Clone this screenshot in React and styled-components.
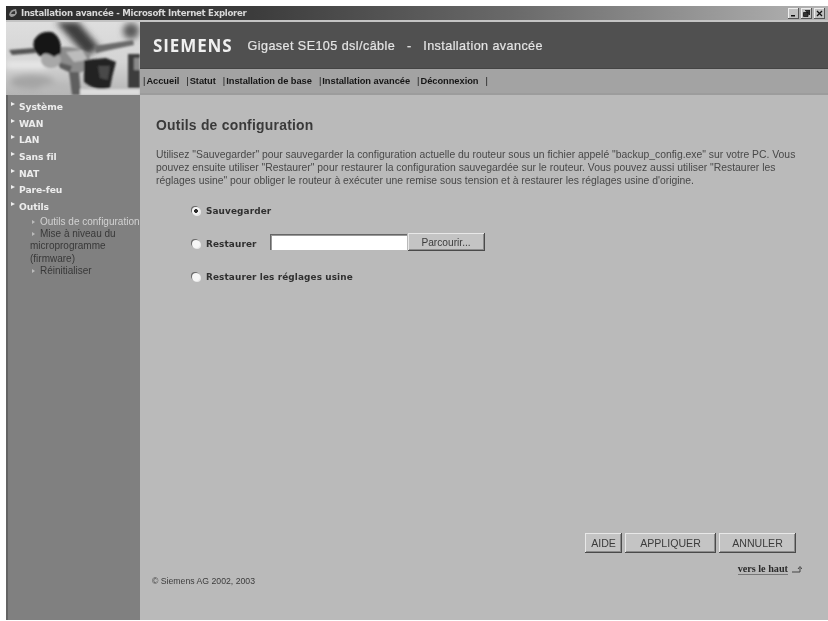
import React from 'react';
import styled, { createGlobalStyle } from 'styled-components';

const GlobalStyle = createGlobalStyle`
  html, body {
    margin: 0;
    padding: 0;
    background: #fff;
    overflow: hidden;
  }
`;

const Page = styled.div`
  width: 828px;
  height: 621px;
  padding: 6px 0 1px 6px;
  box-sizing: border-box;
  background: #fff;
  font-family: "Liberation Sans", Arial, sans-serif;
  filter: blur(0.5px);
`;

const Window = styled.div`
  height: 100%;
  display: flex;
  flex-direction: column;
  background: #bababa;
`;

const TitleBar = styled.div`
  height: 14px;
  flex: none;
  display: flex;
  align-items: center;
  padding: 0 3px 0 2px;
  gap: 3px;
  background: linear-gradient(90deg, #2c2c2c 0%, #3c3c3c 30%, #6a6a6a 62%, #b4b4b4 100%);
  border-bottom: 2px solid #c4c4c4;
  color: #d8d8d8;
  font-family: "DejaVu Sans", sans-serif;
  font-size: 8.6px;
  font-weight: 700;
  letter-spacing: -0.28px;
`;

const TitleText = styled.span`
  flex: 1;
  white-space: nowrap;
`;

const WinButtons = styled.div`
  display: flex;
  gap: 2px;
`;

const WinButton = styled.div`
  width: 11px;
  height: 11px;
  background: #c0c0c0;
  box-shadow: inset -1px -1px 0 #555, inset 1px 1px 0 #eee;
  display: flex;
  align-items: center;
  justify-content: center;
`;

const Top = styled.div`
  display: flex;
  flex: none;
  height: 73px;
`;

const Photo = styled.svg`
  width: 134px;
  height: 73px;
  flex: none;
  display: block;
`;

const TopRight = styled.div`
  flex: 1;
  display: flex;
  flex-direction: column;
`;

const Banner = styled.div`
  height: 47px;
  box-sizing: border-box;
  padding: 1px 0 0 13px;
  display: flex;
  align-items: center;
  background: #505050;
  border-bottom: 1px solid #444;
  color: #e4e4e4;
  white-space: nowrap;
`;

const Brand = styled.span`
  font-family: "Open Sans", sans-serif;
  font-weight: 700;
  font-size: 17px;
  letter-spacing: 0.9px;
  color: #f0f0f0;
  margin-right: 15px;
`;

const BannerText = styled.span`
  font-size: 12.6px;
  font-weight: 400;
  letter-spacing: 0.42px;
  white-space: pre;
  -webkit-text-stroke: 0.2px #e4e4e4;
`;

const Nav = styled.nav`
  flex: 1;
  display: flex;
  align-items: center;
  background: #a3a3a3;
  border-bottom: 2px solid #9c9c9c;
  font-size: 9.3px;
  font-weight: 700;
  letter-spacing: -0.03px;
  color: #161616;
  padding-left: 3px;
  white-space: pre;
`;

const NavItem = styled.span`
  margin-right: 7px;
  &::before {
    content: '|';
    font-weight: 400;
    margin-right: 1px;
  }
`;

const Body = styled.div`
  flex: 1;
  display: flex;
  min-height: 0;
`;

const Sidebar = styled.aside`
  width: 134px;
  flex: none;
  box-sizing: border-box;
  padding-top: 4px;
  background: #808080;
  border-left: 2px solid #646464;
`;

const MenuItem = styled.div`
  position: relative;
  height: 16.7px;
  line-height: 16px;
  padding-left: 11px;
  font-family: "DejaVu Sans", sans-serif;
  font-size: 9.2px;
  font-weight: 700;
  letter-spacing: -0.1px;
  color: #ececec;
  &::before {
    content: '';
    position: absolute;
    left: 3px;
    top: 3px;
    border-left: 4px solid #eee;
    border-top: 2.5px solid transparent;
    border-bottom: 2.5px solid transparent;
  }
`;

const SubMenu = styled.div`
  font-size: 10px;
  line-height: 12.3px;
  margin-right: -2px;
  white-space: nowrap;
`;

const SubItem = styled.div`
  color: ${props => (props.$active ? '#d2d2d2' : '#383838')};
  padding-left: 22px;
`;

const SubFirst = styled.span`
  display: inline-block;
  margin-left: 2px;
  &::before {
    content: '';
    display: inline-block;
    vertical-align: 1px;
    margin-right: 5px;
    border-left: 3px solid #bbb;
    border-top: 2px solid transparent;
    border-bottom: 2px solid transparent;
  }
`;

const Main = styled.main`
  flex: 1;
  min-width: 0;
  display: flex;
  flex-direction: column;
  padding: 22px 0 0 16px;
`;

const Heading = styled.h1`
  margin: 0 0 15px;
  font-size: 13.9px;
  line-height: 16px;
  font-weight: 700;
  color: #3a3a3a;
  letter-spacing: 0.24px;
`;

const Intro = styled.p`
  margin: 0 0 13px;
  width: 672px;
  font-size: 10.38px;
  line-height: 13px;
  color: #484848;
  white-space: pre;
`;

const Options = styled.form`
  display: flex;
  flex-direction: column;
  gap: 11.5px;
  padding-left: 37px;
`;

const Row = styled.div`
  height: 21.5px;
  display: flex;
  align-items: center;
`;

const Radio = styled.span`
  width: 8px;
  height: 8px;
  flex: none;
  margin: 0 6px 0 -1px;
  border-radius: 50%;
  background: ${props => (props.$checked ? 'radial-gradient(circle, #2c2c2c 0 1.6px, #f4f4f4 2.2px)' : '#f6f6f6')};
  box-shadow: -1px -1px 0 #6a6a6a, 1px 1px 0 #e8e8e8;
`;

const OptionLabel = styled.label`
  font-family: "DejaVu Sans", sans-serif;
  font-size: 8.9px;
  font-weight: 700;
  color: #303030;
  letter-spacing: 0.12px;
`;

const FileGroup = styled.div`
  display: flex;
  align-items: center;
  gap: 1px;
  margin: 0 0 3px 13px;
`;

const FileInput = styled.div`
  width: 137px;
  height: 16px;
  background: #fff;
  box-shadow: inset 1px 1px 0 #666, inset 2px 2px 0 #999;
`;

const GrayButton = styled.button`
  width: ${props => props.$w}px;
  height: ${props => props.$h}px;
  padding: 0;
  border: 0;
  background: #c4c4c4;
  box-shadow: inset -1px -1px 0 #4a4a4a, inset 1px 1px 0 #e8e8e8, inset -2px -2px 0 #8c8c8c;
  font-family: "Liberation Sans", Arial, sans-serif;
  font-size: ${props => props.$size}px;
  color: #3c3c3c;
`;

const Actions = styled.div`
  margin-top: auto;
  display: flex;
  justify-content: flex-end;
  gap: 3px;
  padding-right: 32px;
`;

const TopLink = styled.div`
  margin-top: 10px;
  padding-right: 26px;
  display: flex;
  justify-content: flex-end;
  align-items: center;
  gap: 4px;
  font-family: "Liberation Serif", serif;
  font-size: 10.2px;
  font-weight: 700;
  color: #2a2a2a;
  line-height: 11px;
`;

const Underlined = styled.span`
  border-bottom: 1px solid #777;
`;

const Copyright = styled.div`
  margin: 1px 0 34px -4px;
  font-size: 8.7px;
  line-height: 10px;
  color: #3c3c3c;
`;

function KidPhoto() {
  return (
    <Photo viewBox="0 0 134 73">
      <defs>
        <linearGradient id="sky" x1="0" y1="0" x2="0" y2="1">
          <stop offset="0" stopColor="#dedede" />
          <stop offset="0.55" stopColor="#d4d4d4" />
          <stop offset="1" stopColor="#b4b4b4" />
        </linearGradient>
        <filter id="soft"><feGaussianBlur stdDeviation="1.3" /></filter>
        <filter id="softer"><feGaussianBlur stdDeviation="3" /></filter>
      </defs>
      <rect width="134" height="73" fill="url(#sky)" />
      <g filter="url(#softer)">
        <path d="M50 0 L72 0 L94 26 L80 34 Z" fill="#3c3c3c" />
        <ellipse cx="125" cy="9" rx="8" ry="8" fill="#5a5a5a" />
        <ellipse cx="26" cy="60" rx="22" ry="7" fill="#a4a4a4" />
        <ellipse cx="50" cy="66" rx="16" ry="5" fill="#b8b8b8" />
        <rect x="0" y="40" width="40" height="6" fill="#eeeeee" />
      </g>
      <g filter="url(#soft)">
        <path d="M3 28 L28 26 L30 31 L6 33 Z" fill="#555" />
        <path d="M88 24 Q108 21 127 18 L128 23 Q108 27 90 31 Z" fill="#6a6a6a" />
        <path d="M50 26 Q66 22 84 32 L82 46 Q74 54 62 50 Q52 46 48 36 Z" fill="#8c8c8c" />
        <path d="M60 30 L76 28 L82 38 L68 40 Z" fill="#bcbcbc" />
        <path d="M52 40 L66 44 L64 50 L54 46 Z" fill="#5c5c5c" />
        <path d="M63 50 L73 50 L75 73 L66 73 Z" fill="#5e5e5e" />
        <ellipse cx="45" cy="38" rx="10" ry="8" fill="#a8a8a8" />
        <path d="M28 18 Q34 8 46 10 Q56 15 55 31 L48 35 Q38 28 35 35 Q25 28 28 18 Z" fill="#121212" />
        <path d="M78 38 L100 36 L110 40 Q106 54 104 66 Q90 70 78 60 Z" fill="#222" />
        <path d="M92 44 L104 44 L102 58 L94 56 Z" fill="#484848" />
        <rect x="122" y="32" width="12" height="34" fill="#3e3e3e" />
        <rect x="128" y="36" width="6" height="12" fill="#8a8a8a" />
        <rect x="74" y="67" width="60" height="6" fill="#dcdcdc" />
      </g>
    </Photo>
  );
}

const introText = `Utilisez "Sauvegarder" pour sauvegarder la configuration actuelle du routeur sous un fichier appelé "backup_config.exe" sur votre PC. Vous
pouvez ensuite utiliser "Restaurer" pour restaurer la configuration sauvegardée sur le routeur. Vous pouvez aussi utiliser "Restaurer les
réglages usine" pour obliger le routeur à exécuter une remise sous tension et à restaurer les réglages usine d'origine.`;

export default function App() {
  return (
    <Page>
      <GlobalStyle />
      <Window>
        <TitleBar>
          <svg width="10" height="10" viewBox="0 0 10 10">
            <path d="M1 7 Q2 1 8 1 L9 5 Q7 9 3 9 Z" fill="#9a9a9a" />
            <path d="M3 6 Q4 3 7 3 L7 6 Z" fill="#333" />
          </svg>
          <TitleText>Installation avancée - Microsoft Internet Explorer</TitleText>
          <WinButtons>
            <WinButton>
              <svg width="7" height="7" viewBox="0 0 7 7"><rect x="1" y="5" width="4" height="1.5" fill="#111" /></svg>
            </WinButton>
            <WinButton>
              <svg width="7" height="7" viewBox="0 0 7 7"><path d="M2 0.5h5v4h-1.5M0.5 2.5h4.5v4h-4.5z" fill="#333" stroke="#111" strokeWidth="0.8" /></svg>
            </WinButton>
            <WinButton>
              <svg width="7" height="7" viewBox="0 0 7 7"><path d="M1 1l5 5M6 1l-5 5" stroke="#111" strokeWidth="1.3" /></svg>
            </WinButton>
          </WinButtons>
        </TitleBar>
        <Top>
          <KidPhoto />
          <TopRight>
            <Banner>
              <Brand>SIEMENS</Brand>
              <BannerText>{'Gigaset SE105 dsl/câble   -   Installation avancée'}</BannerText>
            </Banner>
            <Nav>
              <NavItem>Accueil</NavItem>
              <NavItem>Statut</NavItem>
              <NavItem>Installation de base</NavItem>
              <NavItem>Installation avancée</NavItem>
              <NavItem>Déconnexion</NavItem>
              <NavItem />
            </Nav>
          </TopRight>
        </Top>
        <Body>
          <Sidebar>
            <MenuItem>Système</MenuItem>
            <MenuItem>WAN</MenuItem>
            <MenuItem>LAN</MenuItem>
            <MenuItem>Sans fil</MenuItem>
            <MenuItem>NAT</MenuItem>
            <MenuItem>Pare-feu</MenuItem>
            <MenuItem>Outils</MenuItem>
            <SubMenu>
              <SubItem $active><SubFirst>Outils de configuration</SubFirst></SubItem>
              <SubItem><SubFirst>Mise à niveau du</SubFirst><br />microprogramme<br />(firmware)</SubItem>
              <SubItem><SubFirst>Réinitialiser</SubFirst></SubItem>
            </SubMenu>
          </Sidebar>
          <Main>
            <Heading>Outils de configuration</Heading>
            <Intro>{introText}</Intro>
            <Options>
              <Row>
                <Radio $checked />
                <OptionLabel>Sauvegarder</OptionLabel>
              </Row>
              <Row>
                <Radio />
                <OptionLabel>Restaurer</OptionLabel>
                <FileGroup>
                  <FileInput />
                  <GrayButton $w={77} $h={18} $size={10.2}>Parcourir...</GrayButton>
                </FileGroup>
              </Row>
              <Row>
                <Radio />
                <OptionLabel>Restaurer les réglages usine</OptionLabel>
              </Row>
            </Options>
            <Actions>
              <GrayButton $w={37} $h={20} $size={10.6}>AIDE</GrayButton>
              <GrayButton $w={91} $h={20} $size={10.6}>APPLIQUER</GrayButton>
              <GrayButton $w={77} $h={20} $size={10.6}>ANNULER</GrayButton>
            </Actions>
            <TopLink>
              <Underlined>vers le haut</Underlined>
              <svg width="10" height="7" viewBox="0 0 10 7">
                <path d="M0 6h8V2M6 3l2-2.5L10 3" fill="none" stroke="#444" strokeWidth="1" />
              </svg>
            </TopLink>
            <Copyright>© Siemens AG 2002, 2003</Copyright>
          </Main>
        </Body>
      </Window>
    </Page>
  );
}
